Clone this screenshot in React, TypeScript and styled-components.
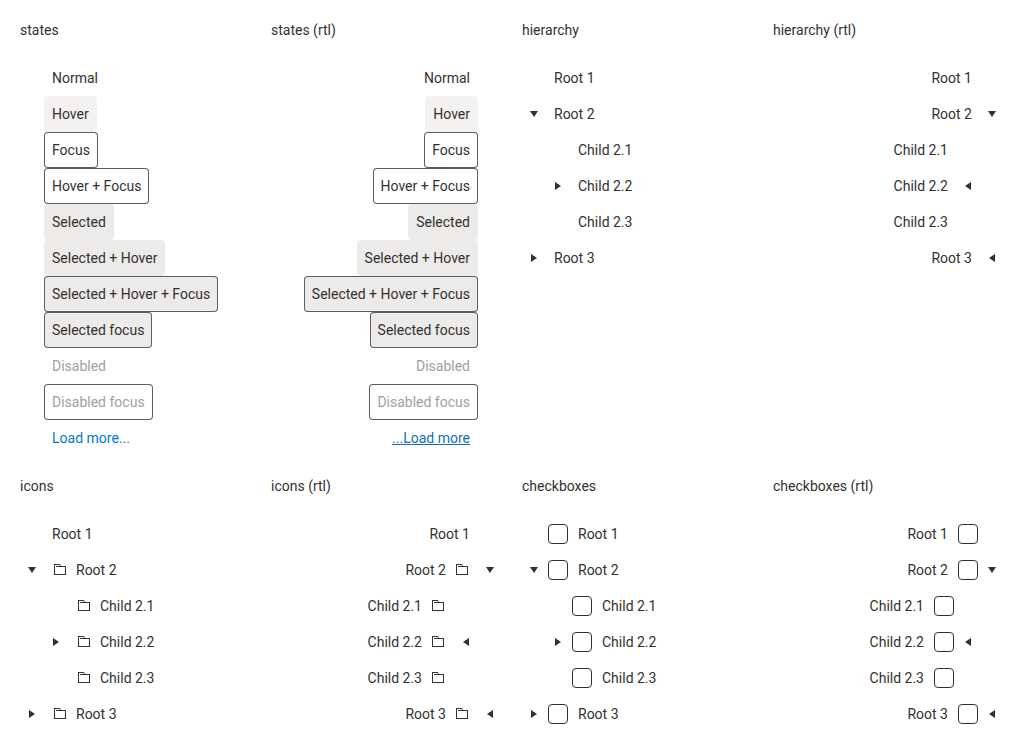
import React, { useId } from 'react';
import styled, { createGlobalStyle, css } from 'styled-components';

const GlobalStyle = createGlobalStyle`
  *, *::before, *::after { box-sizing: border-box; }
  body {
    margin: 0;
    background: #ffffff;
    color: #323130;
    font-family: Roboto, sans-serif;
    font-size: 14px;
    line-height: 20px;
  }
`;

const Page = styled.main`
  display: grid;
  grid-template-columns: repeat(4, minmax(0, 1fr));
  gap: 20px;
  padding: 20px;
`;

const Section = styled.section`
  display: flex;
  flex-direction: column;
  gap: 20px;
`;

const Title = styled.h2`
  margin: 0;
  font-size: 14px;
  font-weight: 400;
  line-height: 20px;
`;

const Tree = styled.ul`
  margin: 0;
  padding: 0;
  list-style: none;
`;

const Group = styled(Tree)`
  padding-inline-start: 24px;
`;

const Row = styled.div<{ $hasToggle?: boolean }>`
  display: flex;
  align-items: center;
  height: 36px;
  padding-inline-start: ${(p) => (p.$hasToggle ? 0 : 24)}px;
`;

const Toggle = styled.button`
  display: flex;
  align-items: center;
  justify-content: center;
  flex: none;
  width: 24px;
  height: 24px;
  padding: 0;
  border: 0;
  background: none;
  color: inherit;
  cursor: pointer;
`;

const Checkbox = styled.input`
  appearance: none;
  flex: none;
  width: 20px;
  height: 20px;
  margin: 0 2px;
  border: 1px solid #323130;
  border-radius: 4px;
  background: #ffffff;

  &:checked {
    border-color: #0078d4;
    background: #0078d4;
  }
`;

type LeafState = { hover?: boolean; focus?: boolean; selected?: boolean; disabled?: boolean };

const leafStyle = css`
  display: inline-flex;
  align-items: center;
  gap: 8px;
  height: 36px;
  padding: 8px;
  border-radius: 4px;
  white-space: nowrap;
`;

const Leaf = styled.span<{ $state: LeafState }>`
  ${leafStyle}
  color: ${(p) => (p.$state.disabled ? '#a19f9d' : '#323130')};
  background: ${(p) => (p.$state.selected ? '#edebe9' : p.$state.hover ? '#f3f2f1' : 'transparent')};
  box-shadow: ${(p) => (p.$state.focus ? 'inset 0 0 0 1px #605e5c' : 'none')};
`;

const CheckLabel = styled.label`
  ${leafStyle}
`;

const LoadMore = styled.a<{ $hover?: boolean }>`
  ${leafStyle}
  color: ${(p) => (p.$hover ? '#106ebe' : '#0078d4')};
  text-decoration: ${(p) => (p.$hover ? 'underline' : 'none')};
`;

const Icon = styled.svg`
  display: block;
  flex: none;
  width: 16px;
  height: 16px;
  fill: currentColor;
`;

const carets = {
  down: 'M4 5h8l-4 6z',
  right: 'M5 4v8l6-4z',
  left: 'M11 4v8l-6-4z',
};

const Caret = ({ direction }: { direction: keyof typeof carets }) => (
  <Icon viewBox="0 0 16 16" aria-hidden="true">
    <path d={carets[direction]} />
  </Icon>
);

const FolderIcon = () => (
  <Icon viewBox="0 0 16 16" aria-hidden="true">
    <path d="M2 2h5.6L9 3.4 8.4 4 7.2 3H3v9h10V5H4V4h10v9H2z" />
  </Icon>
);

type Dir = 'ltr' | 'rtl';
type Variant = 'plain' | 'icons' | 'checkboxes';
type Node = { text: string; icon?: boolean; expanded?: boolean; children?: Node[] };

const states: { text: string; state: LeafState }[] = [
  { text: 'Normal', state: {} },
  { text: 'Hover', state: { hover: true } },
  { text: 'Focus', state: { focus: true } },
  { text: 'Hover + Focus', state: { focus: true } },
  { text: 'Selected', state: { selected: true } },
  { text: 'Selected + Hover', state: { selected: true, hover: true } },
  { text: 'Selected + Hover + Focus', state: { selected: true, hover: true, focus: true } },
  { text: 'Selected focus', state: { selected: true, focus: true } },
  { text: 'Disabled', state: { disabled: true } },
  { text: 'Disabled focus', state: { disabled: true, focus: true } },
];

const nodes: Node[] = [
  { text: 'Root 1' },
  {
    text: 'Root 2',
    icon: true,
    expanded: true,
    children: [
      { text: 'Child 2.1', icon: true },
      { text: 'Child 2.2', icon: true, children: [] },
      { text: 'Child 2.3', icon: true },
    ],
  },
  { text: 'Root 3', icon: true, children: [] },
];

const TreeNode = ({ node, variant, dir }: { node: Node; variant: Variant; dir: Dir }) => {
  const id = useId();
  const collapsed = dir === 'rtl' ? 'left' : 'right';
  return (
    <li role="treeitem" aria-expanded={node.children ? !!node.expanded : undefined}>
      <Row $hasToggle={!!node.children}>
        {node.children && (
          <Toggle type="button" aria-label={node.expanded ? 'Collapse' : 'Expand'}>
            <Caret direction={node.expanded ? 'down' : collapsed} />
          </Toggle>
        )}
        {variant === 'checkboxes' ? (
          <>
            <Checkbox type="checkbox" id={id} />
            <CheckLabel htmlFor={id}>{node.text}</CheckLabel>
          </>
        ) : (
          <Leaf $state={{}}>
            {variant === 'icons' && node.icon && <FolderIcon />}
            {node.text}
          </Leaf>
        )}
      </Row>
      {node.expanded && node.children && (
        <Group role="group">
          {node.children.map((child) => (
            <TreeNode key={child.text} node={child} variant={variant} dir={dir} />
          ))}
        </Group>
      )}
    </li>
  );
};

const StatesSection = ({ title, dir }: { title: string; dir: Dir }) => (
  <Section>
    <Title>{title}</Title>
    <Tree role="tree" dir={dir}>
      {states.map(({ text, state }) => (
        <li key={text} role="treeitem" aria-selected={!!state.selected} aria-disabled={!!state.disabled}>
          <Row>
            <Leaf $state={state}>{text}</Leaf>
          </Row>
        </li>
      ))}
      <li role="treeitem">
        <Row>
          <LoadMore href="#more" $hover={dir === 'rtl'}>
            Load more...
          </LoadMore>
        </Row>
      </li>
    </Tree>
  </Section>
);

const TreeSection = ({ title, variant, dir }: { title: string; variant: Variant; dir: Dir }) => (
  <Section>
    <Title>{title}</Title>
    <Tree role="tree" dir={dir}>
      {nodes.map((node) => (
        <TreeNode key={node.text} node={node} variant={variant} dir={dir} />
      ))}
    </Tree>
  </Section>
);

export default function App() {
  return (
    <>
      <GlobalStyle />
      <Page>
        <StatesSection title="states" dir="ltr" />
        <StatesSection title="states (rtl)" dir="rtl" />
        <TreeSection title="hierarchy" variant="plain" dir="ltr" />
        <TreeSection title="hierarchy (rtl)" variant="plain" dir="rtl" />
        <TreeSection title="icons" variant="icons" dir="ltr" />
        <TreeSection title="icons (rtl)" variant="icons" dir="rtl" />
        <TreeSection title="checkboxes" variant="checkboxes" dir="ltr" />
        <TreeSection title="checkboxes (rtl)" variant="checkboxes" dir="rtl" />
      </Page>
    </>
  );
}
